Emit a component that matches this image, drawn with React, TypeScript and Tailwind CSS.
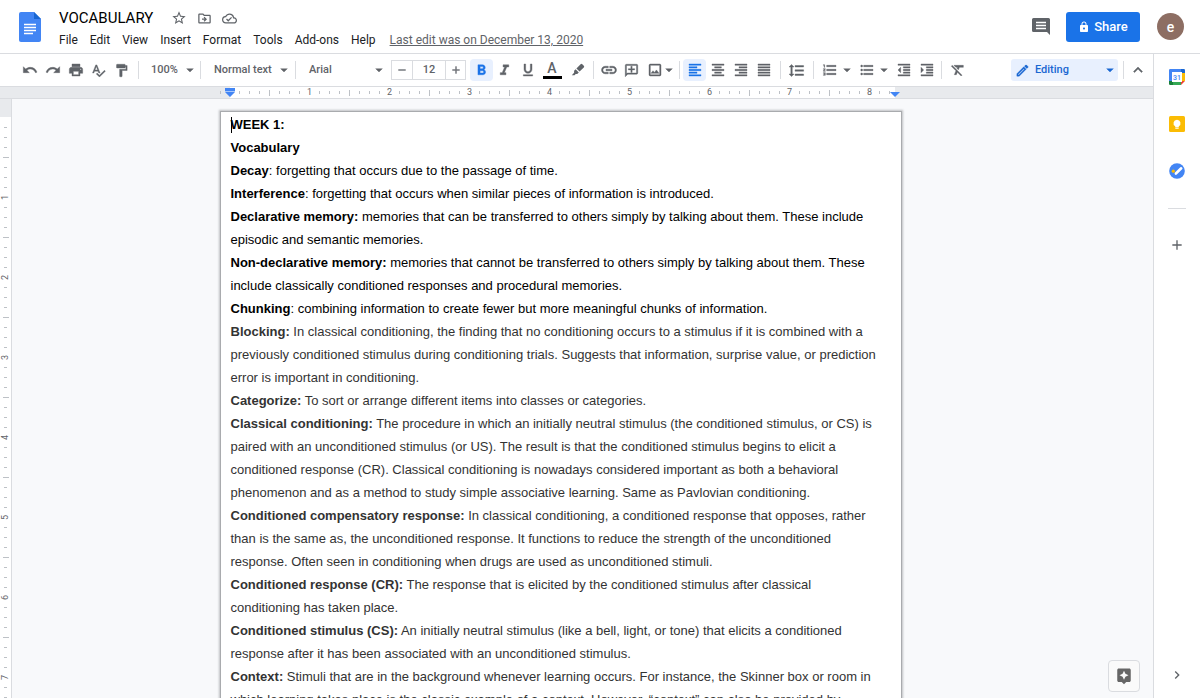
import React from "react";
import {
  MdAdd,
  MdArrowDropDown,
  MdAssistant,
  MdChevronRight,
  MdFormatAlignCenter,
  MdFormatAlignJustify,
  MdFormatAlignLeft,
  MdFormatAlignRight,
  MdFormatBold,
  MdFormatClear,
  MdFormatIndentDecrease,
  MdFormatIndentIncrease,
  MdFormatItalic,
  MdFormatLineSpacing,
  MdFormatListBulleted,
  MdFormatListNumbered,
  MdFormatPaint,
  MdFormatUnderlined,
  MdInsertLink,
  MdKeyboardArrowUp,
  MdLock,
  MdOutlineAddComment,
  MdOutlineCloudDone,
  MdOutlineDriveFileMove,
  MdOutlineEdit,
  MdOutlineImage,
  MdPrint,
  MdRedo,
  MdRemove,
  MdSpellcheck,
  MdStarBorder,
  MdUndo,
} from "react-icons/md";

interface Entry {
  term: string;
  lines: string[];
  dark?: boolean;
}

const menus = ["File", "Edit", "View", "Insert", "Format", "Tools", "Add-ons", "Help"];

const entries: Entry[] = [
  { term: "WEEK 1:", lines: [""], dark: true },
  { term: "Vocabulary", lines: [""], dark: true },
  { term: "Decay", lines: [": forgetting that occurs due to the passage of time."], dark: true },
  {
    term: "Interference",
    lines: [": forgetting that occurs when similar pieces of information is introduced."],
    dark: true,
  },
  {
    term: "Declarative memory:",
    lines: [
      " memories that can be transferred to others simply by talking about them. These include",
      "episodic and semantic memories.",
    ],
    dark: true,
  },
  {
    term: "Non-declarative memory:",
    lines: [
      " memories that cannot be transferred to others simply by talking about them. These",
      "include classically conditioned responses and procedural memories.",
    ],
    dark: true,
  },
  {
    term: "Chunking",
    lines: [": combining information to create fewer but more meaningful chunks of information."],
    dark: true,
  },
  {
    term: "Blocking:",
    lines: [
      " In classical conditioning, the finding that no conditioning occurs to a stimulus if it is combined with a",
      "previously conditioned stimulus during conditioning trials. Suggests that information, surprise value, or prediction",
      "error is important in conditioning.",
    ],
  },
  { term: "Categorize:", lines: [" To sort or arrange different items into classes or categories."] },
  {
    term: "Classical conditioning:",
    lines: [
      " The procedure in which an initially neutral stimulus (the conditioned stimulus, or CS) is",
      "paired with an unconditioned stimulus (or US). The result is that the conditioned stimulus begins to elicit a",
      "conditioned response (CR). Classical conditioning is nowadays considered important as both a behavioral",
      "phenomenon and as a method to study simple associative learning. Same as Pavlovian conditioning.",
    ],
  },
  {
    term: "Conditioned compensatory response:",
    lines: [
      " In classical conditioning, a conditioned response that opposes, rather",
      "than is the same as, the unconditioned response. It functions to reduce the strength of the unconditioned",
      "response. Often seen in conditioning when drugs are used as unconditioned stimuli.",
    ],
  },
  {
    term: "Conditioned response (CR):",
    lines: [
      " The response that is elicited by the conditioned stimulus after classical",
      "conditioning has taken place.",
    ],
  },
  {
    term: "Conditioned stimulus (CS):",
    lines: [
      " An initially neutral stimulus (like a bell, light, or tone) that elicits a conditioned",
      "response after it has been associated with an unconditioned stimulus.",
    ],
  },
  {
    term: "Context:",
    lines: [
      " Stimuli that are in the background whenever learning occurs. For instance, the Skinner box or room in",
      "which learning takes place is the classic example of a context. However, “context” can also be provided by",
    ],
  },
];

const DocsLogo = () => (
  <svg viewBox="0 0 22 30" className="h-[30px] w-[22px]" aria-hidden="true">
    <path d="M2 0h13l7 7v21a2 2 0 0 1-2 2H2a2 2 0 0 1-2-2V2a2 2 0 0 1 2-2z" fill="#4285f4" />
    <path d="M15 0l7 7h-7z" fill="#1967d2" />
    <path d="M5 12.500h12M5 15.500h12M5 18.500h12M5 21.500h9" stroke="#fff" strokeWidth="1.4" />
  </svg>
);

const CommentsIcon = () => (
  <svg viewBox="0 0 18 18" className="size-[18px]" aria-hidden="true">
    <path d="M1.500 0h15A1.500 1.500 0 0 1 18 1.500V17l-3-3H1.500A1.500 1.500 0 0 1 0 12.500V1.500A1.500 1.500 0 0 1 1.500 0z" fill="#5f6368" />
    <path d="M4 4.500h10M4 7.500h10M4 10.500h10" stroke="#fff" strokeWidth="1.300" />
  </svg>
);

const MarkerIcon = () => (
  <svg viewBox="0 0 14 14" className="size-[14px]" aria-hidden="true">
    <path d="M9.600 1.200a1.200 1.200 0 0 1 1.700 0l1.500 1.500a1.200 1.200 0 0 1 0 1.700L8.600 8.600 5.400 5.400zM4.600 6.200l3.200 3.200-1.600 1.600H4.700L3.500 12.300H.8l2.300-2.600V7.700z" fill="#5f6368" />
  </svg>
);

const CalendarIcon = () => (
  <svg viewBox="0 0 16 16" className="size-4" aria-hidden="true">
    <path d="M1.200 0H12v4H4v8H0V1.200A1.200 1.200 0 0 1 1.200 0z" fill="#4285f4" />
    <path d="M12 0h2.800A1.200 1.200 0 0 1 16 1.200V4h-4z" fill="#1967d2" />
    <path d="M12 4h4v8h-4z" fill="#fbbc04" />
    <path d="M4 12h8v4H4z" fill="#34a853" />
    <path d="M0 12h4v4H1.200A1.200 1.200 0 0 1 0 14.800z" fill="#188038" />
    <path d="M12 12h4l-4 4z" fill="#ea4335" />
    <path d="M3 3h10v10H3z" fill="#fff" />
    <text x="8" y="10.600" textAnchor="middle" fontSize="7" fontFamily="Roboto, sans-serif" fontWeight="500" fill="#4285f4">
      31
    </text>
  </svg>
);

const KeepIcon = () => (
  <svg viewBox="0 0 16 16" className="size-4" aria-hidden="true">
    <rect width="16" height="16" rx="1.500" fill="#fbbc04" />
    <path d="M8 3.700a3.500 3.500 0 0 0-1.800 6.500v.9h3.600v-.9A3.500 3.500 0 0 0 8 3.700zM6.300 11.600h3.400v1.200H6.300z" fill="#fff" />
  </svg>
);

const TasksIcon = () => (
  <svg viewBox="0 0 16 16" className="size-4" aria-hidden="true">
    <circle cx="8" cy="8" r="7.800" fill="#4285f4" />
    <circle cx="4.300" cy="8.200" r="1.600" fill="#fbbc04" />
    <path d="M6.900 10.500l5.300-5.200" stroke="#fff" strokeWidth="2.600" strokeLinecap="round" />
  </svg>
);

const Divider = () => <span className="h-[18px] w-px shrink-0 bg-[#dadce0]" />;

const ToolButton = ({
  label,
  active,
  className = "",
  children,
}: {
  label: string;
  active?: boolean;
  className?: string;
  children: React.ReactNode;
}) => (
  <button
    aria-label={label}
    className={`flex h-[22px] shrink-0 items-center justify-center rounded-sm text-base ${
      active ? "bg-[#e8f0fe] text-[#1a73e8]" : "text-[#5f6368]"
    } ${className || "w-[23px]"}`}
  >
    {children}
  </button>
);

const Header = () => (
  <header className="flex h-[54px] shrink-0 items-start justify-between border-b border-[#dadce0] pr-4 pl-[19px]">
    <div className="flex">
      <a href="#home" aria-label="Docs home" className="mt-3">
        <DocsLogo />
      </a>
      <div className="ml-[18px] pt-2">
        <div className="flex h-5 items-center text-[#5f6368]">
          <h1 className="text-[15px] text-black">VOCABULARY</h1>
          <div className="ml-[18px] flex items-center gap-[10px] text-[15px]">
            <button aria-label="Star"><MdStarBorder className="size-4" /></button>
            <button aria-label="Move"><MdOutlineDriveFileMove /></button>
            <button aria-label="Document status"><MdOutlineCloudDone /></button>
          </div>
        </div>
        <div className="flex h-6 items-center">
          <nav className="flex gap-3 text-xs text-[#202124]">
            {menus.map((menu) => (
              <button key={menu}>{menu}</button>
            ))}
          </nav>
          <a href="#history" className="ml-[14px] text-xs text-[#5f6368] underline">
            Last edit was on December 13, 2020
          </a>
        </div>
      </div>
    </div>
    <div className="flex h-[53px] items-center">
      <button aria-label="Comments"><CommentsIcon /></button>
      <button className="ml-4 flex h-[30px] w-[74px] items-center justify-center gap-1 rounded-[3px] bg-[#1a73e8] text-[13px] font-medium text-white">
        <MdLock className="size-3" />
        Share
      </button>
      <button
        aria-label="Account"
        className="ml-[17px] flex size-[27px] items-center justify-center rounded-full bg-[#8d6e63] text-sm font-medium text-white"
      >
        e
      </button>
    </div>
  </header>
);

const Toolbar = () => (
  <div className="flex h-8 shrink-0 items-center pr-1 pl-[18px] text-[11px] font-medium text-[#5f6368] [&_path:not([fill='none'])]:stroke-[0.6]">
    <ToolButton label="Undo"><MdUndo /></ToolButton>
    <ToolButton label="Redo"><MdRedo /></ToolButton>
    <ToolButton label="Print"><MdPrint /></ToolButton>
    <ToolButton label="Spelling"><MdSpellcheck className="size-[15px]" /></ToolButton>
    <ToolButton label="Paint format"><MdFormatPaint className="size-[15px]" /></ToolButton>
    <span className="w-[5px]" />
    <Divider />
    <button className="flex w-[61px] items-center justify-between pr-[2px] pl-3">
      100%
      <MdArrowDropDown className="size-4" />
    </button>
    <Divider />
    <button className="flex w-[94px] items-center justify-between pr-[3px] pl-[13px]">
      Normal text
      <MdArrowDropDown className="size-4" />
    </button>
    <Divider />
    <button className="flex w-[91px] items-center justify-between pl-[13px]">
      Arial
      <MdArrowDropDown className="size-4" />
    </button>
    <div className="mx-1 flex h-5 border border-[#dadce0] text-sm">
      <button aria-label="Decrease font size" className="flex w-5 items-center justify-center"><MdRemove className="size-3" /></button>
      <input
        aria-label="Font size"
        defaultValue="12"
        className="w-[34px] border-x border-[#dadce0] text-center text-[11px]"
      />
      <button aria-label="Increase font size" className="flex w-[19px] items-center justify-center"><MdAdd className="size-3" /></button>
    </div>
    <ToolButton label="Bold" active><MdFormatBold className="size-[17px]" /></ToolButton>
    <ToolButton label="Italic"><MdFormatItalic className="size-[17px]" /></ToolButton>
    <ToolButton label="Underline"><MdFormatUnderlined /></ToolButton>
    <ToolButton label="Text color" className="w-[26px]">
      <span className="flex h-[18px] w-[19px] items-start justify-center border-b-[3px] border-black text-sm leading-[14px]">A</span>
    </ToolButton>
    <ToolButton label="Highlight color" className="w-[26px]"><MarkerIcon /></ToolButton>
    <span className="w-[2px]" />
    <Divider />
    <span className="w-[3px]" />
    <ToolButton label="Insert link"><MdInsertLink className="size-[18px]" /></ToolButton>
    <ToolButton label="Add comment"><MdOutlineAddComment className="size-[15px] -scale-x-100" /></ToolButton>
    <ToolButton label="Insert image"><MdOutlineImage /></ToolButton>
    <MdArrowDropDown className="-ml-[5px] size-4" />
    <span className="w-[2px]" />
    <Divider />
    <span className="w-[3px]" />
    <ToolButton label="Left align" active><MdFormatAlignLeft /></ToolButton>
    <ToolButton label="Center align"><MdFormatAlignCenter /></ToolButton>
    <ToolButton label="Right align"><MdFormatAlignRight /></ToolButton>
    <ToolButton label="Justify"><MdFormatAlignJustify /></ToolButton>
    <span className="w-[5px]" />
    <Divider />
    <span className="w-1" />
    <ToolButton label="Line spacing"><MdFormatLineSpacing className="size-[17px]" /></ToolButton>
    <span className="w-[5px]" />
    <Divider />
    <span className="w-1" />
    <ToolButton label="Numbered list"><MdFormatListNumbered /></ToolButton>
    <MdArrowDropDown className="-ml-[2px] size-4" />
    <ToolButton label="Bulleted list"><MdFormatListBulleted /></ToolButton>
    <MdArrowDropDown className="-ml-[2px] size-4" />
    <ToolButton label="Decrease indent"><MdFormatIndentDecrease /></ToolButton>
    <ToolButton label="Increase indent"><MdFormatIndentIncrease /></ToolButton>
    <span className="w-[3px]" />
    <Divider />
    <span className="w-1" />
    <ToolButton label="Clear formatting"><MdFormatClear /></ToolButton>
    <button className="ml-auto flex h-[22px] w-[107px] items-center rounded-[3px] bg-[#e8f0fe] px-1 text-[#1967d2]">
      <MdOutlineEdit className="size-[15px]" />
      <span className="ml-[5px]">Editing</span>
      <MdArrowDropDown className="-mr-1 ml-auto size-4" />
    </button>
    <span className="w-[5px]" />
    <Divider />
    <ToolButton label="Hide the menus" className="ml-[2px] w-[23px]"><MdKeyboardArrowUp className="size-[18px]" /></ToolButton>
  </div>
);

const HorizontalRuler = () => (
  <div className="flex h-[13px] shrink-0 justify-center border-y border-[#dadce0] bg-[#e8eaed] pr-[32px]">
    <div className="relative flex w-[682px] justify-start pr-[7px]">
      <div className="flex flex-1 bg-white bg-linear-to-r from-[#e8eaed] from-[10px] to-white to-[10px]">
        <span className="w-[5px] shrink-0 self-center">
          <span className="block h-[3px] w-px bg-[#bdc1c6]" />
        </span>
        {Array.from({ length: 67 }, (_, i) => (
          <span key={i} className="flex w-[10px] shrink-0 items-center justify-center text-[9px] leading-none text-[#5f6368]">
            {i > 0 && i % 8 === 0 ? (
              i / 8
            ) : (
              <span className={`w-px bg-[#bdc1c6] ${i % 4 === 0 ? "h-[6px]" : "h-[3px]"}`} />
            )}
          </span>
        ))}
      </div>
      <svg viewBox="0 0 10 9" className="absolute top-[1px] left-[5px] h-[9px] w-[10px]" aria-hidden="true">
        <path d="M0 0h10v3H0zM0 4h10L5 9z" fill="#4285f4" />
        <path d="M0 3h10v1H0z" fill="#a8c7fa" />
      </svg>
      <svg viewBox="0 0 10 5" className="absolute top-[5px] right-[2px] h-[5px] w-[10px]" aria-hidden="true">
        <path d="M0 0h10L5 5z" fill="#4285f4" />
      </svg>
    </div>
  </div>
);

const VerticalRuler = () => (
  <div className="h-full w-3 shrink-0 overflow-hidden border-r border-[#dadce0] bg-white">
    <div className="h-[18px] bg-[#e8eaed]" />
    <div className="flex flex-col pt-[5px]">
      {Array.from({ length: 58 }, (_, n) => {
        const i = n + 1;
        return (
          <span key={i} className="flex h-[10px] shrink-0 items-center justify-center text-[9px] leading-none text-[#5f6368]">
            {i % 8 === 0 ? (
              <span className="-rotate-90">{i / 8}</span>
            ) : (
              <span className={`h-px bg-[#bdc1c6] ${i % 4 === 0 ? "w-[6px]" : "w-[3px]"}`} />
            )}
          </span>
        );
      })}
    </div>
  </div>
);

const Page = () => (
  <main className="mt-3 h-full w-[682px] shrink-0 border border-[#a9abae] bg-white pt-px pl-[10px] font-['Liberation_Sans',Arial,sans-serif] text-[13px] leading-[23px] shadow-[0_0_2px_1px_rgba(60,64,67,0.3)]">
    {entries.map((entry, index) => (
      <p key={entry.term} className={`relative whitespace-nowrap ${entry.dark ? "text-black" : "text-[#333333]"}`}>
        {index === 0 && <span className="absolute top-1 left-0 h-4 w-px bg-black" />}
        <b>{entry.term}</b>
        {entry.lines.map((line, i) => (
          <React.Fragment key={i}>
            {i > 0 && <br />}
            {line}
          </React.Fragment>
        ))}
      </p>
    ))}
  </main>
);

const SidePanel = () => (
  <aside className="flex w-[47px] shrink-0 flex-col items-center border-l border-[#dadce0] pt-[15px] pb-[15px] text-[#5f6368]">
    <div className="flex flex-col gap-[31px]">
      <button aria-label="Calendar"><CalendarIcon /></button>
      <button aria-label="Keep"><KeepIcon /></button>
      <button aria-label="Tasks"><TasksIcon /></button>
    </div>
    <span className="mt-[29px] h-px w-[18px] bg-[#dadce0]" />
    <button aria-label="Get add-ons" className="mt-7"><MdAdd className="size-4" /></button>
    <button aria-label="Hide side panel" className="mt-auto"><MdChevronRight className="size-4" /></button>
  </aside>
);

export default function App() {
  return (
    <div className="flex h-screen flex-col overflow-hidden bg-white font-[Roboto,sans-serif]">
      <Header />
      <div className="flex min-h-0 flex-1">
        <div className="relative flex min-w-0 flex-1 flex-col">
          <Toolbar />
          <HorizontalRuler />
          <div className="flex min-h-0 flex-1 bg-[#f8f9fb]">
            <VerticalRuler />
            <div className="flex min-w-0 flex-1 justify-center overflow-hidden pr-[44px]">
              <Page />
            </div>
          </div>
          <button
            aria-label="Explore"
            className="absolute right-[13px] bottom-[6px] flex size-8 items-center justify-center rounded-sm border border-[#dadce0] bg-[#fafafa] text-[#666666]"
          >
            <MdAssistant className="size-[18px]" />
          </button>
        </div>
        <SidePanel />
      </div>
    </div>
  );
}
